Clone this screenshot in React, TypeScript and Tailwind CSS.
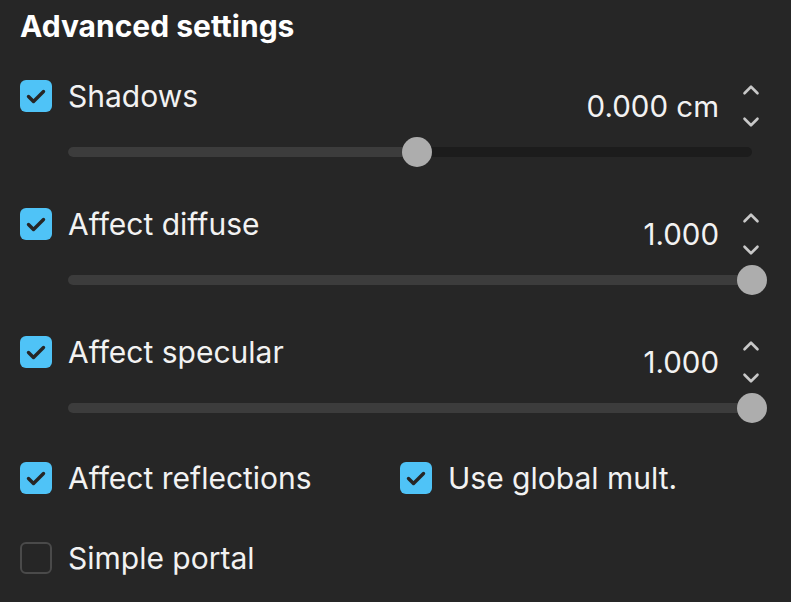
import { ChevronUp, ChevronDown } from "lucide-react"

interface SliderRowProps {
  label: string
  value: string
  fraction: number
  checked?: boolean
}

function Checkbox({ checked }: { checked: boolean }) {
  if (!checked) {
    return <div className="w-8 h-8 shrink-0 rounded-[6px] border-2 border-[#4a4a4a]" />
  }
  return (
    <div className="w-8 h-8 shrink-0 rounded-[6px] bg-[#4fc3f7] flex items-center justify-center">
      <svg width="32" height="32" viewBox="0 0 32 32" fill="none">
        <path
          d="M8.5 16.5 L13.5 21.5 L23.5 11.5"
          stroke="#262626"
          strokeWidth="3.4"
          strokeLinecap="round"
          strokeLinejoin="round"
        />
      </svg>
    </div>
  )
}

function CheckItem({ label, checked = true }: { label: string; checked?: boolean }) {
  return (
    <div className="flex items-center gap-4 h-8">
      <Checkbox checked={checked} />
      <span className="text-[30px] leading-8 text-[#f2f2f2]">{label}</span>
    </div>
  )
}

function SliderRow({ label, value, fraction, checked = true }: SliderRowProps) {
  return (
    <div className="flex flex-col">
      <div className="flex items-start justify-between">
        <CheckItem label={label} checked={checked} />
        <div className="flex items-center gap-[19px] mt-[6px] mr-[7px] h-10">
          <span className="text-[29.5px] leading-8 text-[#f2f2f2]">{value}</span>
          <div className="flex flex-col items-center justify-between h-10 text-[#c8c8c8]">
            <ChevronUp size={26} strokeWidth={2.4} className="-my-[9px]" />
            <ChevronDown size={26} strokeWidth={2.4} className="-my-[9px]" />
          </div>
        </div>
      </div>
      <div className="relative h-[30px] mt-[11px] ml-12 mr-[19px] flex items-center">
        <div className="w-full h-[10px] rounded-full bg-[#1c1c1c] overflow-hidden">
          <div className="h-full bg-[#3c3c3c]" style={{ width: `${fraction * 100}%` }} />
        </div>
        <div
          className="absolute top-0 w-[30px] h-[30px] rounded-full bg-[#adadad] -translate-x-1/2"
          style={{ left: `${fraction * 100}%` }}
        />
      </div>
    </div>
  )
}

export default function App() {
  return (
    <div
      className="w-[791px] h-[602px] bg-[#262626] text-white px-5 pt-[10px] overflow-hidden"
      style={{ fontFamily: "Inter, 'Noto Sans', sans-serif" }}
    >
      <h2 className="text-[30px] leading-8 font-bold text-white">Advanced settings</h2>

      <div className="mt-[38px] flex flex-col gap-[41px]">
        <SliderRow label="Shadows" value="0.000 cm" fraction={0.51} />
        <SliderRow label="Affect diffuse" value="1.000" fraction={1} />
        <SliderRow label="Affect specular" value="1.000" fraction={1} />
      </div>

      <div className="mt-[39px] flex">
        <div className="w-[380px]">
          <CheckItem label="Affect reflections" />
        </div>
        <CheckItem label="Use global mult." />
      </div>

      <div className="mt-12">
        <CheckItem label="Simple portal" checked={false} />
      </div>
    </div>
  )
}
